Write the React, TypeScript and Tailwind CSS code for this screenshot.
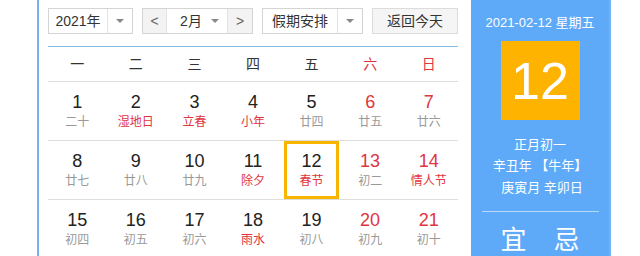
type Day = { n: number; lunar: string; red?: boolean; redLunar?: boolean; today?: boolean };

const WEEK = ['一', '二', '三', '四', '五', '六', '日'];

const ROWS: Day[][] = [
  [
    { n: 1, lunar: '二十' },
    { n: 2, lunar: '湿地日', redLunar: true },
    { n: 3, lunar: '立春', redLunar: true },
    { n: 4, lunar: '小年', redLunar: true },
    { n: 5, lunar: '廿四' },
    { n: 6, lunar: '廿五', red: true },
    { n: 7, lunar: '廿六', red: true },
  ],
  [
    { n: 8, lunar: '廿七' },
    { n: 9, lunar: '廿八' },
    { n: 10, lunar: '廿九' },
    { n: 11, lunar: '除夕', redLunar: true },
    { n: 12, lunar: '春节', redLunar: true, today: true },
    { n: 13, lunar: '初二', red: true },
    { n: 14, lunar: '情人节', red: true, redLunar: true },
  ],
  [
    { n: 15, lunar: '初四' },
    { n: 16, lunar: '初五' },
    { n: 17, lunar: '初六' },
    { n: 18, lunar: '雨水', redLunar: true },
    { n: 19, lunar: '初八' },
    { n: 20, lunar: '初九', red: true },
    { n: 21, lunar: '初十', red: true },
  ],
];

const font = "font-['Liberation_Sans','Noto_Sans_CJK_SC',sans-serif]";

function Caret() {
  return (
    <span className="flex h-full w-[25px] items-center justify-center border-l border-[#e3e3e3]">
      <span className="h-0 w-0 border-x-[4px] border-t-[4px] border-x-transparent border-t-[#888]" />
    </span>
  );
}

function Controls() {
  return (
    <div className="flex h-[26px] items-stretch gap-[9px] text-[14px] text-[#333]">
      <div className="flex w-[85px] items-center border border-[#d4d4d4] bg-white">
        <span className="flex-1 text-center">2021年</span>
        <Caret />
      </div>
      <div className="flex w-[111px] items-stretch border border-[#d4d4d4] bg-white">
        <span className="flex w-[23px] items-center justify-center bg-[#f3f3f3] text-[#666]">&lt;</span>
        <span className="flex flex-1 items-center border-x border-[#e3e3e3]">
          <span className="flex-1 pl-1 text-center">2月</span>
          <span className="mr-2 h-0 w-0 border-x-[4px] border-t-[4px] border-x-transparent border-t-[#888]" />
        </span>
        <span className="flex w-[24px] items-center justify-center bg-[#f3f3f3] text-[#666]">&gt;</span>
      </div>
      <div className="flex w-[101px] items-center border border-[#d4d4d4] bg-white">
        <span className="flex-1 text-center">假期安排</span>
        <Caret />
      </div>
      <div className="flex w-[86px] items-center justify-center border border-[#dcdcdc] bg-[#f5f5f5]">
        返回今天
      </div>
    </div>
  );
}

function Cell({ d }: { d: Day }) {
  const num = d.red ? 'text-[#e0353f]' : 'text-[#222]';
  const lunar = d.redLunar ? 'text-[#e0353f]' : 'text-[#999]';
  return (
    <div className="flex h-[58px] items-center justify-center">
      <div
        className={
          'flex h-full w-full flex-col items-center justify-center ' +
          (d.today ? 'mx-[2px] border-[3px] border-[#f7b500]' : '')
        }
      >
        <span className={`text-[18px] leading-[21px] ${num}`}>{d.n}</span>
        <span className={`mt-[1px] text-[12px] leading-[17px] ${lunar}`}>{d.lunar}</span>
      </div>
    </div>
  );
}

export default function App() {
  return (
    <div className={`h-[256px] w-[640px] overflow-hidden bg-white ${font}`}>
      <div className="ml-[37px] flex w-[574px] border-x-2 border-[#72b1f2]">
        <div className="w-[432px] pl-[9px] pr-[13px] pt-[8px]">
          <Controls />
          <div className="mt-[12px] border-t border-[#86bde3]" />
          <div className="grid h-[35px] grid-cols-7 items-center border-b border-[#ddd] text-[14px]">
            {WEEK.map((w, i) => (
              <span key={w} className={'text-center ' + (i >= 5 ? 'text-[#e0353f]' : 'text-[#333]')}>
                {w}
              </span>
            ))}
          </div>
          {ROWS.map((row, r) => (
            <div key={r} className="grid grid-cols-7 border-b border-[#ddd]">
              {row.map((d) => (
                <Cell key={d.n} d={d} />
              ))}
            </div>
          ))}
        </div>
        <div className="flex h-[256px] flex-1 flex-col items-center bg-[#5eaaf8] text-white">
          <p className="mt-[15px] text-[13px] leading-[16px]">2021-02-12 星期五</p>
          <div className="mt-[10px] flex h-[79px] w-[79px] items-center justify-center bg-[#fdb300] text-[52px] leading-none">
            12
          </div>
          <p className="mt-[16px] text-[13px] leading-[18px]">正月初一</p>
          <p className="mt-[3px] text-[13px] leading-[18px]">辛丑年 【牛年】</p>
          <p className="mt-[4px] pl-[4px] text-[13px] leading-[18px]">庚寅月 辛卯日</p>
          <div className="mt-[14px] w-[117px] border-t border-[#b9d9fb]" />
          <div className="mt-[13px] flex w-full justify-around px-[16px] text-[26px] leading-[30px]">
            <span>宜</span>
            <span>忌</span>
          </div>
        </div>
      </div>
    </div>
  );
}
